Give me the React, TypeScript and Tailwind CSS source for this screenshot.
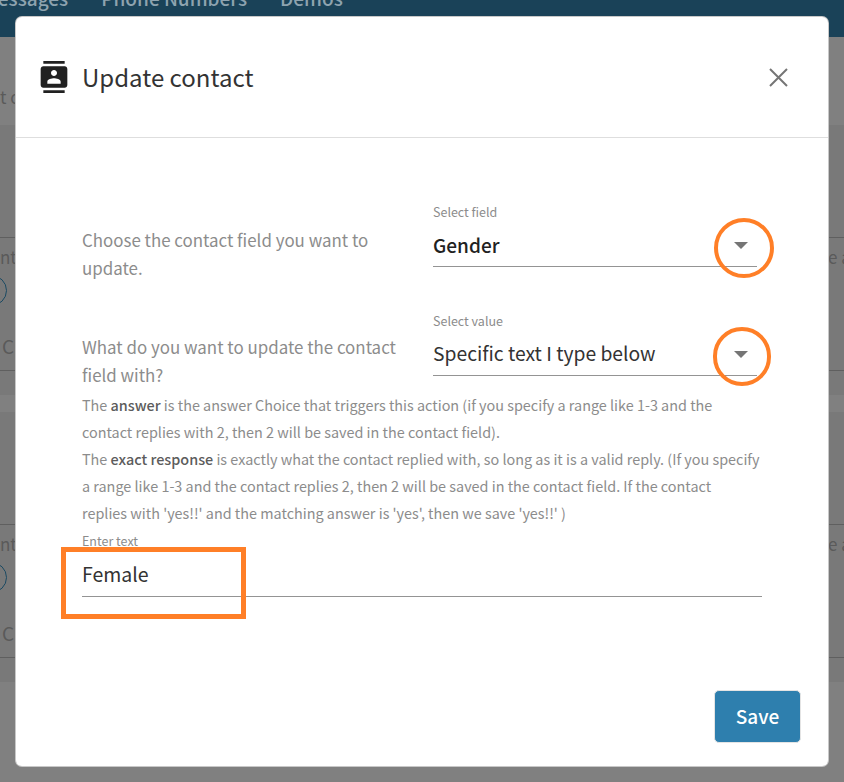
const Triangle = () => (
  <svg width="14" height="8" viewBox="0 0 14 8" className="mb-[16px] shrink-0">
    <path d="M0 0h14L7 7z" fill="#757575" />
  </svg>
);

function SelectField({ label, value, bold }: { label: string; value: string; bold?: boolean }) {
  return (
    <div className="relative w-[324px]">
      <div className="h-[18px] text-[12.5px] leading-[18px] text-[#8c8c8c]">{label}</div>
      <div className="flex h-[46px] items-end justify-between border-b border-[#949494] pr-[9px]">
        <span className={bold ? "mb-[6px] text-[19px] leading-[30px] font-medium text-[#212121]" : "mb-[7px] text-[19.3px] leading-[30px] text-[#333333]"}>{value}</span>
        <Triangle />
      </div>
    </div>
  );
}

function BackCard() {
  return (
    <div className="flex h-[270px] flex-col bg-[#797979]">
      <div className="h-[113px] border-b border-[#5f5f5f]" />
      <div className="flex h-[36px] items-center justify-between text-[17px] leading-none text-[#5a5a5a]">
        <span className="w-4 overflow-hidden whitespace-nowrap">nt</span>
        <span className="w-4 overflow-hidden whitespace-nowrap">e a</span>
      </div>
      <div className="ml-[-24px] mt-[1px] h-[31px] w-[31px] shrink-0 rounded-full border border-[#1b4a63]" />
      <div className="mt-[25px] h-[39px] w-4 overflow-hidden whitespace-nowrap pl-[2px] text-[19px] leading-[30px] text-[#5a5a5a]">Ch</div>
      <div className="h-px bg-[#5f5f5f]" />
    </div>
  );
}

export default function App() {
  return (
    <div className="relative h-[782px] w-[844px] overflow-hidden bg-[#808080] font-['Noto_Sans_CJK_SC',sans-serif]">
      {/* page behind the dialog */}
      <div className="flex h-[37px] items-start gap-[33px] overflow-hidden bg-[#1a4258] text-[19px] leading-none font-medium text-[#8ea3af]">
        <span className="ml-[-18px] mt-[-12px] whitespace-nowrap">Messages</span>
        <span className="mt-[-12px] whitespace-nowrap">Phone Numbers</span>
        <span className="mt-[-12px] whitespace-nowrap">Demos</span>
      </div>
      <div className="h-[88px] pt-[50px] text-[17px] leading-5 text-[#5a5a5a]">
        <div className="w-4 overflow-hidden whitespace-nowrap">t c</div>
      </div>
      <BackCard />
      <div className="h-[17px]" />
      <BackCard />

      {/* dialog */}
      <div className="absolute left-[16px] top-[17px] flex h-[749px] w-[812px] flex-col rounded-[6px] bg-white shadow-[0_0_0_1px_#c8c8c8]">
        <header className="flex h-[121px] shrink-0 items-center border-b border-[#dedede] pb-[2px] pl-[22px] pr-[40px]">
          <svg width="32" height="32" viewBox="0 0 24 24" fill="#212121" className="mt-[2px] shrink-0">
            <path d="M20 0H4v2h16V0zM4 24h16v-2H4v2zM20 4H4c-1.1 0-2 .9-2 2v12c0 1.1.9 2 2 2h16c1.1 0 2-.9 2-2V6c0-1.1-.9-2-2-2zm-8 2.75c1.24 0 2.25 1.01 2.25 2.25s-1.01 2.25-2.25 2.25S9.75 10.24 9.75 9 10.76 6.75 12 6.75zM17 17H7v-1.5c0-1.67 3.33-2.5 5-2.5s5 .83 5 2.5V17z" />
          </svg>
          <h1 className="ml-[12px] mt-[2px] flex-1 text-[24px] leading-9 font-normal text-[#333333]">Update contact</h1>
          <svg width="19" height="19" viewBox="0 0 19 19" className="mt-[2px] shrink-0" stroke="#757575" strokeWidth="2" fill="none">
            <path d="M1 1l17 17M18 1L1 18" />
          </svg>
        </header>

        <div className="flex flex-1 flex-col pl-[66px] pr-[66px] pt-[65px]">
          <div className="flex h-[109px] items-start">
            <p className="mt-[23px] w-[351px] pr-[30px] text-[16.9px] leading-[28px] text-[#8c8c8c]">Choose the contact field you want to update.</p>
            <div className="relative">
              <SelectField label="Select field" value="Gender" bold />
              <div className="absolute left-[281px] top-[15px] h-[60px] w-[60px] rounded-full border-[4px] border-[#ff7f27]" />
            </div>
          </div>

          <div className="flex items-start">
            <p className="mt-[21px] w-[351px] pr-[30px] text-[16.9px] leading-[28px] text-[#8c8c8c]">What do you want to update the contact field with?</p>
            <div className="relative">
              <SelectField label="Select value" value="Specific text I type below" />
              <div className="absolute left-[280px] top-[15px] h-[59px] w-[58px] rounded-full border-[4px] border-[#ff7f27]" />
            </div>
          </div>

          <div className="mt-[2px] text-[14.4px] leading-[27px] text-[#8c8c8c]">
            <p>The <strong className="font-medium text-[#5c5c5c]">answer</strong> is the answer Choice that triggers this action (if you specify a range like 1-3 and the contact replies with 2, then 2 will be saved in the contact field).</p>
            <p>The <strong className="font-medium text-[#5c5c5c]">exact response</strong> is exactly what the contact replied with, so long as it is a valid reply. (If you specify a range like 1-3 and the contact replies 2, then 2 will be saved in the contact field. If the contact<br />replies with 'yes!!' and the matching answer is 'yes', then we save 'yes!!' )</p>
          </div>

          <div className="relative mt-[6px]">
            <div className="h-[18px] text-[12.5px] leading-[18px] text-[#8c8c8c]">Enter text</div>
            <div className="flex h-[47px] items-end border-b border-[#949494] pb-[7px] text-[19.5px] leading-[30px] text-[#333333]">Female</div>
            <div className="absolute left-[-21px] top-[15px] h-[72px] w-[185px] border-[5px] border-[#ff7f27]" />
          </div>

          <div className="mt-auto flex justify-end pb-[23px]">
            <button className="mr-[-39px] h-[53px] w-[87px] rounded-[5px] border border-[#e4e4e4] bg-[#2e7fae] pb-[2px] text-[19px] leading-none font-medium text-white">Save</button>
          </div>
        </div>
      </div>
    </div>
  );
}
